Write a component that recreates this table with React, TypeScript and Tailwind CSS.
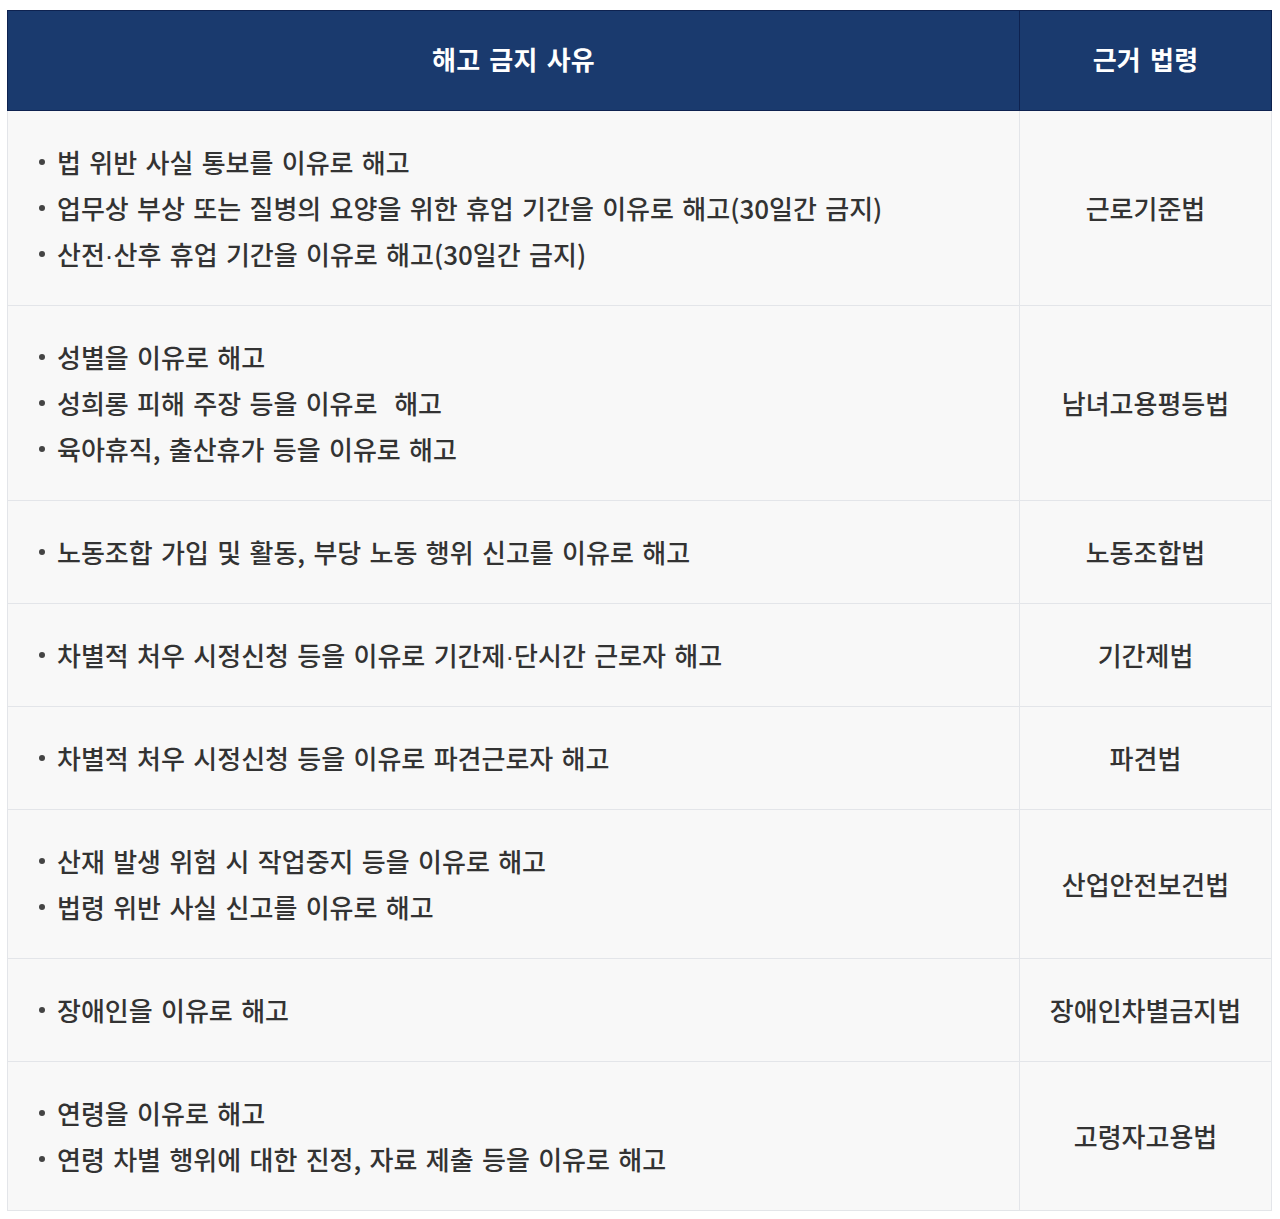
const rows: { items: string[]; law: string }[] = [
  {
    items: [
      '법 위반 사실 통보를 이유로 해고',
      '업무상 부상 또는 질병의 요양을 위한 휴업 기간을 이유로 해고(30일간 금지)',
      '산전·산후 휴업 기간을 이유로 해고(30일간 금지)',
    ],
    law: '근로기준법',
  },
  {
    items: ['성별을 이유로 해고', '성희롱 피해 주장 등을 이유로  해고', '육아휴직, 출산휴가 등을 이유로 해고'],
    law: '남녀고용평등법',
  },
  { items: ['노동조합 가입 및 활동, 부당 노동 행위 신고를 이유로 해고'], law: '노동조합법' },
  { items: ['차별적 처우 시정신청 등을 이유로 기간제·단시간 근로자 해고'], law: '기간제법' },
  { items: ['차별적 처우 시정신청 등을 이유로 파견근로자 해고'], law: '파견법' },
  { items: ['산재 발생 위험 시 작업중지 등을 이유로 해고', '법령 위반 사실 신고를 이유로 해고'], law: '산업안전보건법' },
  { items: ['장애인을 이유로 해고'], law: '장애인차별금지법' },
  { items: ['연령을 이유로 해고', '연령 차별 행위에 대한 진정, 자료 제출 등을 이유로 해고'], law: '고령자고용법' },
]

// the middle dot is drawn narrow in the reference, so give it a latin font
function Text({ value }: { value: string }) {
  const parts = value.split('·')
  return (
    <>
      {parts.map((p, i) => (
        <span key={i}>
          {i > 0 && <span style={{ fontFamily: '"Liberation Sans", sans-serif' }}>·</span>}
          {p}
        </span>
      ))}
    </>
  )
}

export default function App() {
  return (
    <div
      className="bg-white min-h-[1219px] pt-[10px] pl-[7px]"
      style={{ fontFamily: '"Noto Sans CJK KR", "Noto Sans", sans-serif' }}
    >
      <table className="w-[1265px] border-collapse table-fixed">
        <colgroup>
          <col className="w-[1012px]" />
          <col />
        </colgroup>
        <thead>
          <tr className="h-[100px] bg-[#1a3a6e]">
            <th className="border border-[#0e2250] text-white text-[26px] font-bold leading-[40px] tracking-[0.2px] [word-spacing:3px] pb-1">
              해고 금지 사유
            </th>
            <th className="border border-[#0e2250] border-l-[#e6e9ef] text-white text-[26px] font-bold leading-[40px] tracking-[0.2px] [word-spacing:3px] pb-1">
              근거 법령
            </th>
          </tr>
        </thead>
        <tbody>
          {rows.map((row) => (
            <tr key={row.law} className="bg-[#f8f8f8]">
              <td className="border border-[#e3e5e9] pl-[31px] pr-4 py-[28px] align-middle">
                {row.items.map((item) => (
                  <div
                    key={item}
                    className="flex items-center h-[46px] overflow-visible text-[26px] font-medium leading-[46px] text-[#333333] whitespace-pre [word-spacing:2.5px]"
                  >
                    <span className="w-[6px] h-[6px] rounded-full bg-[#444444] mr-[12px] shrink-0" />
                    <span className="block h-[46px]">
                      <Text value={item} />
                    </span>
                  </div>
                ))}
              </td>
              <td className="border border-[#e3e5e9] text-center text-[26px] font-medium leading-[46px] text-[#333333] align-middle">
                {row.law}
              </td>
            </tr>
          ))}
        </tbody>
      </table>
    </div>
  )
}
